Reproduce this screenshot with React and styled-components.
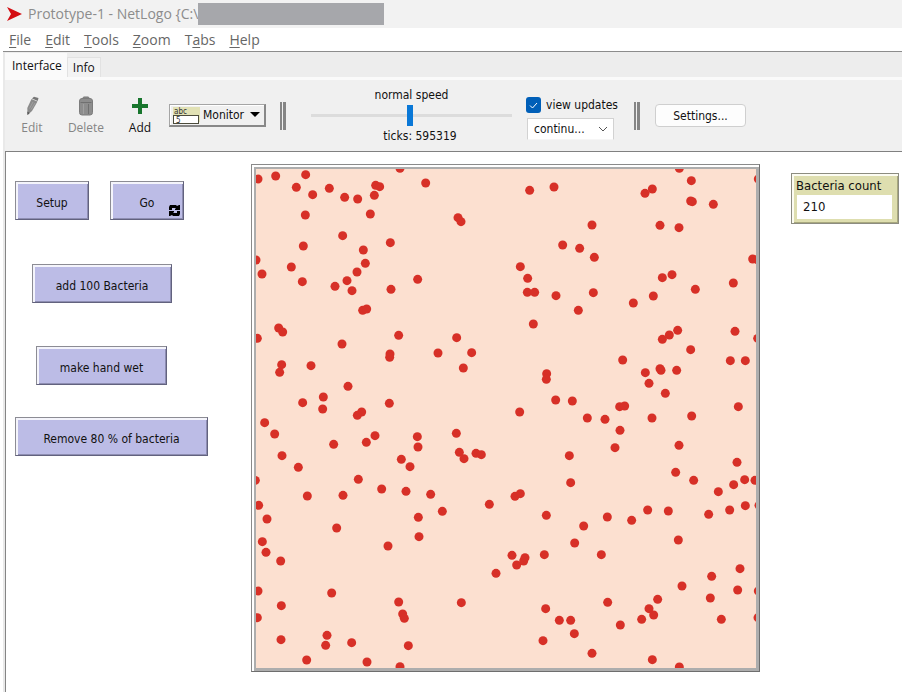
import React, { useState } from "react";
import styled, { createGlobalStyle, css } from "styled-components";

const ui = '"DejaVu Sans Condensed", "DejaVu Sans", sans-serif';
const system = '"Open Sans", "Noto Sans", sans-serif';

const GlobalStyle = createGlobalStyle`
  *, *::before, *::after { box-sizing: border-box; }
  html, body, #root { min-height: 100vh; }
  body { margin: 0; background: #fff; color: #111; font: 12px/16px ${system}; }
  button, input, select { font: inherit; color: inherit; margin: 0; }
`;

const Window = styled.div`
  display: flex;
  flex-direction: column;
  min-height: 100vh;
`;

const TitleBar = styled.header`
  display: flex;
  align-items: center;
  height: 28px;
  padding-left: 7px;
  background: #f2f2f2;
`;

const Title = styled.h1`
  margin: 0 0 0 6px;
  font: 400 14px/20px ${system};
  color: #8c8c8c;
  white-space: pre;
`;

const Redaction = styled.span`
  width: 186px;
  height: 22px;
  background: #a6a7ab;
`;

const MenuBar = styled.nav`
  display: flex;
  gap: 14px;
  height: 24px;
  margin-left: 3px;
  padding-left: 6px;
  border-bottom: 1px solid #8c8c8c;
`;

const MenuLink = styled.a`
  font: 14px/24px ${system};
  color: #666;
  text-decoration: none;
  u { text-underline-offset: 2px; }
`;

const Body = styled.main`
  display: flex;
  flex-direction: column;
  flex: 1;
  margin-left: 3px;
  border-left: 2px solid #e9e9e9;
`;

const TabStrip = styled.div`
  display: flex;
  align-items: flex-end;
  height: 28px;
  background: #ededed;
  border-bottom: 3px solid #fafafa;
`;

const Tab = styled.button`
  height: ${(p) => (p.$active ? 24 : 20)}px;
  padding: ${(p) => (p.$active ? "0 4px 0 6px" : "0 5px")};
  border: 1px solid ${(p) => (p.$active ? "#fafafa" : "#e2e2e2")};
  border-bottom: 0;
  background: ${(p) => (p.$active ? "#fafafa" : "#f3f3f3")};
  font: 12px/16px ${system};
  color: #111;
`;

const Toolbar = styled.div`
  display: flex;
  align-items: center;
  height: 72px;
  background: #f0f0f0;
  border-bottom: 1px solid #808080;
  font: 12px/16px ${system};
`;

const Tool = styled.button`
  display: flex;
  flex-direction: column;
  align-items: center;
  gap: 4px;
  width: 54px;
  padding: 0;
  border: 0;
  background: none;
  color: #111;
  &:disabled { color: #858585; }
  svg { display: block; }
`;

const WidgetPicker = styled.label`
  display: flex;
  align-items: center;
  gap: 3px;
  width: 97px;
  height: 23px;
  margin-left: 2px;
  padding: 0 4px 0 3px;
  background: #f0f0f0;
  border: 1px solid #a5a5a5;
  border-right: 2px solid #888;
  border-bottom: 2px solid #888;
  box-shadow: inset 1px 1px #fff;
  select {
    flex: 1;
    min-width: 0;
    padding: 0;
    border: 0;
    appearance: none;
    background: none;
    font: 12px/16px ${ui};
  }
  svg { flex: none; }
`;

const Separator = styled.span`
  width: 6px;
  height: 28px;
  margin: 0 ${(p) => p.$after}px 0 ${(p) => p.$before}px;
  border: solid #858585;
  border-width: 0 3px 0 2px;
`;

const Speed = styled.div`
  display: flex;
  flex-direction: column;
  align-items: center;
  flex: 0 1 201px;
`;

const SpeedLabel = styled.label`
  font: 12px/16px ${ui};
`;

const Ticks = styled.output`
  padding-left: 17px;
  font: 12px/16px ${ui};
`;

const SpeedSlider = styled.input`
  width: 100%;
  height: 25px;
  appearance: none;
  background: none;
  &::-webkit-slider-runnable-track { height: 3px; background: #dcdcdc; }
  &::-webkit-slider-thumb {
    appearance: none;
    width: 6px;
    height: 21px;
    margin-top: -9px;
    background: #0a78d7;
  }
`;

const Updates = styled.div`
  display: flex;
  flex-direction: column;
  gap: 5px;
  margin-left: 14px;
  padding-top: 5px;
`;

const CheckLabel = styled.label`
  display: flex;
  align-items: center;
  gap: 5px;
  font: 12px/16px ${ui};
`;

const Check = styled.input`
  appearance: none;
  width: 15px;
  height: 16px;
  border-radius: 3px;
  background: #005fb8 url("data:image/svg+xml,%3Csvg xmlns='http://www.w3.org/2000/svg' viewBox='0 0 15 16'%3E%3Cpath d='M4 8.500L6.500 11L11 6' fill='none' stroke='white'/%3E%3C/svg%3E") center no-repeat;
`;

const ModeBox = styled.span`
  display: flex;
  align-items: center;
  width: 87px;
  height: 22px;
  margin-left: 1px;
  padding: 0 5px 0 6px;
  background: #fff;
  border: 1px solid #d2d2d2;
  border-bottom-color: #f6f6f6;
  select {
    flex: 1;
    min-width: 0;
    padding: 0;
    border: 0;
    appearance: none;
    background: none;
    font: 12px/16px ${ui};
  }
`;

const SettingsButton = styled.button`
  width: 91px;
  height: 23px;
  padding: 0;
  background: #fdfdfd;
  border: 1px solid #cfcfcf;
  border-radius: 4px;
  font: 12px/16px ${ui};
`;

const Workspace = styled.section`
  display: grid;
  grid-template-columns: 236px minmax(0, 1fr) 108px;
  align-items: start;
  flex: 1;
  padding: 12px 3px 20px 9px;
  border-left: 1px solid #858585;
`;

const Controls = styled.div`
  display: flex;
  flex-direction: column;
  align-items: flex-start;
  padding-top: 17px;
`;

const ControlRow = styled.div`
  display: flex;
  gap: ${(p) => p.$gap || 0}px;
  padding-left: ${(p) => p.$indent || 0}px;
  margin-bottom: ${(p) => p.$after || 0}px;
`;

const bevel = css`
  border: 1px solid #8c8c94;
  box-shadow: inset 2px 2px #f4f4fb, inset -1px -1px #8e8eb2;
`;

const ModelButton = styled.button`
  position: relative;
  width: ${(p) => p.$width}px;
  height: 39px;
  padding: 4px 0 0;
  background: #bcbce6;
  ${bevel}
  border-right-color: #62627e;
  border-bottom-color: #62627e;
  font: 12px/16px ${ui};
  svg { position: absolute; right: 3px; bottom: 3px; }
`;

const View = styled.div`
  padding: 2px 0 0 2px;
  margin-right: 31px;
  background: #fff;
  border: 1px solid #8a8a8a;
  border-color: #8a8a8a #6e6e6e #6e6e6e #8a8a8a;
`;

const World = styled.svg`
  display: block;
  width: 100%;
  height: auto;
  border: solid #adadad;
  border-width: 2px 3px 3px 2px;
  background: #fce0d0;
`;

const Monitor = styled.div`
  display: flex;
  flex-direction: column;
  height: 51px;
  margin-top: 9px;
  padding: 4px 5px 4px 4px;
  background: #dedeaf;
  border: 1px solid #8c8c80;
  box-shadow: inset 2px 2px #fcfcf2, inset -1px -1px #a8a87e;
  font: 13px/16px ${ui};
`;

const Reading = styled.output`
  flex: 1;
  margin: 1px 1px 0;
  padding: 4px 6px;
  background: #fff;
`;

/* Bacteria positions, recorded in four map tiles (three units per screen pixel). */
const tiles = [
  {
    x: 0, y: 0,
    dots: [
      [24, 57], [77, 48], [167, 44], [139, 82], [188, 104], [238, 85], [284, 112], [323, 117], [377, 76],
      [389, 80], [373, 106], [450, 25], [527, 69], [361, 162], [166, 165], [624, 173], [633, 185],
      [278, 227], [421, 248], [160, 258], [340, 270], [18, 300], [36, 342], [124, 321], [346, 310],
      [321, 336], [291, 362], [157, 365], [255, 379], [306, 392], [423, 388], [503, 358], [338, 451],
      [350, 447], [86, 504], [98, 516], [22, 535], [276, 552], [446, 526], [420, 582], [419, 592],
      [620, 533], [564, 579], [665, 578], [640, 624], [95, 614], [89, 637], [183, 617], [294, 679],
      [220, 711], [158, 728], [218, 747], [418, 730], [335, 756], [322, 766],
    ],
  },
  {
    x: 765, y: 0,
    dots: [
      [74, 91], [147, 81], [420, 100], [442, 87], [523, 25], [559, 62], [760, 57], [557, 123], [562, 125],
      [625, 133], [261, 195], [465, 196], [522, 203], [173, 255], [224, 265], [268, 292], [46, 320],
      [68, 355], [67, 397], [89, 397], [153, 407], [265, 398], [220, 451], [385, 429], [445, 408],
      [472, 353], [501, 344], [571, 388], [685, 369], [743, 297], [757, 299], [85, 492], [472, 538],
      [493, 525], [518, 511], [690, 514], [758, 535], [557, 569], [676, 602], [721, 602], [353, 600],
      [125, 641], [124, 658], [421, 638], [465, 626], [468, 631], [515, 631], [432, 670], [481, 700],
      [152, 720], [202, 723], [344, 740], [359, 738], [700, 740], [44, 756],
    ],
  },
  {
    x: 0, y: 768,
    dots: [
      [44, 20], [74, 54], [251, 85], [349, 79], [375, 59], [502, 62], [504, 93], [619, 52], [96, 119],
      [145, 154], [454, 130], [480, 152], [628, 109], [642, 128], [678, 112], [694, 116], [16, 193],
      [325, 190], [395, 219], [468, 226], [542, 235], [172, 240], [279, 238], [577, 286], [718, 265],
      [26, 268], [51, 309], [505, 304], [260, 336], [507, 362], [414, 390], [37, 377], [48, 409],
      [92, 435], [738, 472], [24, 525], [245, 531], [94, 569], [446, 558], [634, 560], [458, 594],
      [463, 607], [22, 605], [231, 658], [227, 688], [93, 671], [305, 680], [475, 689], [170, 732],
      [351, 738], [450, 752],
    ],
  },
  {
    x: 765, y: 768,
    dots: [
      [247, 6], [300, 10], [345, 43], [441, 6], [560, 0], [330, 95], [522, 88], [193, 119], [512, 169],
      [566, 193], [696, 139], [686, 206], [719, 191], [750, 193], [640, 227], [197, 200], [30, 241],
      [46, 233], [124, 298], [236, 330], [307, 303], [380, 313], [428, 282], [490, 285], [611, 295],
      [674, 282], [721, 269], [762, 268], [520, 372], [209, 381], [21, 418], [35, 447], [56, 435],
      [60, 425], [118, 416], [289, 416], [705, 458], [620, 481], [531, 510], [698, 522], [760, 525],
      [616, 546], [458, 550], [432, 578], [446, 597], [410, 610], [308, 559], [122, 578], [163, 613],
      [197, 613], [346, 627], [208, 653], [114, 674], [261, 712], [442, 731], [523, 753], [649, 610],
      [759, 605],
    ],
  },
];

const LogoIcon = () => (
  <svg width="15" height="16" viewBox="0 0 15 16" aria-hidden="true">
    <path d="M0 1L15 8L0 15L4 8Z" fill="#d40d12" />
  </svg>
);

const PencilIcon = () => (
  <svg width="13" height="20" viewBox="0 0 13 20" aria-hidden="true">
    <path d="M5.500 3L11.500 5.500L6 15L1.500 19L1.300 12Z" fill="#8b8b8b" />
    <path d="M6 2.500L8 .8L12.500 2L11.700 5Z" fill="#777" />
    <path d="M7 6L3.500 12.500M9 7L5 13.500" stroke="#a5a5a5" strokeWidth=".8" />
    <path d="M1.300 15.500L1.500 19L3.700 17Z" fill="#555" />
  </svg>
);

const TrashIcon = () => (
  <svg width="14" height="20" viewBox="0 0 14 20" aria-hidden="true">
    <rect x="4" y="1" width="6" height="3" rx="1" fill="#8f8f8f" stroke="#777" />
    <rect x="0.500" y="2.500" width="13" height="16.500" rx="2.500" fill="#8d8d8d" stroke="#7c7c7c" />
    <path d="M1.500 6.500H12.500M9.500 8V18" stroke="#707070" />
    <path d="M4.500 8V18" stroke="#a0a0a0" />
  </svg>
);

const PlusIcon = () => (
  <svg width="18" height="20" viewBox="0 0 18 20" aria-hidden="true">
    <path d="M9 2V18M1 10H17" stroke="#18762d" strokeWidth="4" />
  </svg>
);

const MonitorIcon = () => (
  <svg width="27" height="17" viewBox="0 0 27 17" aria-hidden="true">
    <rect width="27" height="15" fill="#e1e1b4" />
    <text x="1" y="7" fontSize="8" fontFamily="DejaVu Sans Condensed, sans-serif" fill="#333">abc</text>
    <rect x="0.500" y="8.500" width="25" height="8" fill="#fff" stroke="#4c4c3c" />
    <text x="3" y="16" fontSize="8" fontFamily="DejaVu Sans Condensed, sans-serif" fill="#333">5</text>
  </svg>
);

const ForeverIcon = () => (
  <svg width="11" height="11" viewBox="0 0 11 11" aria-hidden="true">
    <path d="M0 5V2L1 0H7L8 1L10 0H11V5H6V4L7 3H3V5Z" />
    <path d="M11 6V9L10 11H4L3 10L1 11H0V6H5V7L4 8H8V6Z" />
  </svg>
);

const menus = [["", "F", "ile"], ["", "E", "dit"], ["", "T", "ools"], ["", "Z", "oom"], ["T", "a", "bs"], ["", "H", "elp"]];

export default function App() {
  const [speed, setSpeed] = useState(49);
  const [updates, setUpdates] = useState(true);
  return (
    <Window>
      <GlobalStyle />
      <TitleBar>
        <LogoIcon />
        <Title>{"Prototype-1 - NetLogo {C:\\"}</Title>
        <Redaction />
      </TitleBar>
      <MenuBar aria-label="Main menu">
        {menus.map(([a, key, b]) => (
          <MenuLink href="#" key={a + key + b}>{a}<u>{key}</u>{b}</MenuLink>
        ))}
      </MenuBar>
      <Body>
        <TabStrip role="tablist">
          <Tab role="tab" aria-selected="true" $active>Interface</Tab>
          <Tab role="tab" aria-selected="false">Info</Tab>
        </TabStrip>
        <Toolbar>
          <Tool disabled><PencilIcon />Edit</Tool>
          <Tool disabled><TrashIcon />Delete</Tool>
          <Tool><PlusIcon />Add</Tool>
          <WidgetPicker>
            <MonitorIcon />
            <select aria-label="Widget type"><option>Monitor</option></select>
            <svg width="10" height="6" viewBox="0 0 10 6" aria-hidden="true"><path d="M0 0H10L5 5Z" /></svg>
          </WidgetPicker>
          <Separator $before={14} $after={25} />
          <Speed>
            <SpeedLabel htmlFor="speed">normal speed</SpeedLabel>
            <SpeedSlider id="speed" type="range" value={speed} onChange={(e) => setSpeed(Number(e.target.value))} />
            <Ticks>ticks: 595319</Ticks>
          </Speed>
          <Updates>
            <CheckLabel>
              <Check type="checkbox" checked={updates} onChange={(e) => setUpdates(e.target.checked)} />
              view updates
            </CheckLabel>
            <ModeBox>
              <select aria-label="Update mode"><option>continu...</option></select>
              <svg width="10" height="6" viewBox="0 0 10 6" aria-hidden="true" fill="none" stroke="#555"><path d="M1 1L5 5L9 1" /></svg>
            </ModeBox>
          </Updates>
          <Separator $before={16} $after={15} />
          <SettingsButton>Settings...</SettingsButton>
        </Toolbar>
        <Workspace>
          <Controls>
            <ControlRow $gap={21} $after={44}>
              <ModelButton $width={74}>Setup</ModelButton>
              <ModelButton $width={74}>Go<ForeverIcon /></ModelButton>
            </ControlRow>
            <ControlRow $indent={17} $after={43}>
              <ModelButton $width={140}>add 100 Bacteria</ModelButton>
            </ControlRow>
            <ControlRow $indent={21} $after={32}>
              <ModelButton $width={131}>make hand wet</ModelButton>
            </ControlRow>
            <ControlRow>
              <ModelButton $width={193}>Remove 80 % of bacteria</ModelButton>
            </ControlRow>
          </Controls>
          <View>
            <World viewBox="18 27 1500 1497" role="img" aria-label="Bacteria in the world">
              {tiles.map((tile) => (
                <g key={`${tile.x}-${tile.y}`} transform={`translate(${tile.x} ${tile.y})`} fill="#d73027">
                  {tile.dots.map(([x, y]) => <circle key={`${x}-${y}`} cx={x} cy={y} r="13.500" />)}
                </g>
              ))}
            </World>
          </View>
          <Monitor>
            <label htmlFor="count">Bacteria count</label>
            <Reading id="count">210</Reading>
          </Monitor>
        </Workspace>
      </Body>
    </Window>
  );
}
